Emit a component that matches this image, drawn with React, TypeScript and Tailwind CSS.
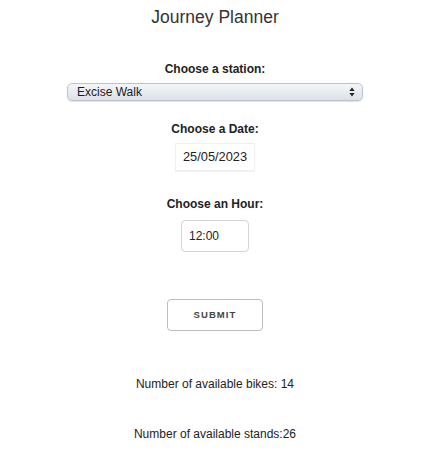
import * as React from 'react';

const JourneyPlanner: React.FC = () => {
  return (
    <div
      className="w-[430px] h-[476px] bg-white flex flex-col items-center text-[#333]"
      style={{ fontFamily: '"Liberation Sans", Arial, sans-serif' }}
    >
      <h1 className="mt-[7px] text-[17.5px] leading-[20px] font-normal text-[#333]">Journey Planner</h1>

      {/* Station */}
      <label className="mt-[35px] text-[12px] leading-[14px] font-bold text-[#222]">Choose a station:</label>
      <div className="mt-[7px] w-[296px] h-[18px] rounded-[5px] border border-[#bcc3cb] bg-gradient-to-b from-[#f3f6f9] to-[#dce2e8] shadow-[0_1px_1px_rgba(0,0,0,0.12)] flex items-center justify-between pl-[9px] pr-[7px]">
        <span className="text-[12px] leading-[14px] text-[#1a1a1a]">Excise Walk</span>
        <svg width="6" height="10" viewBox="0 0 6 10" className="text-[#222]">
          <path d="M3 0.5 L5.6 4 L0.4 4 Z" fill="currentColor" />
          <path d="M3 9.5 L5.6 6 L0.4 6 Z" fill="currentColor" />
        </svg>
      </div>

      {/* Date */}
      <label className="mt-[21px] text-[12px] leading-[14px] font-bold text-[#222]">Choose a Date:</label>
      <div className="mt-[7px] w-[80px] h-[28px] border border-[#f0f0f0] shadow-[0_1px_1px_rgba(0,0,0,0.05)] flex items-center justify-center">
        <span className="text-[12.8px] leading-[14px] text-[#222]">25/05/2023</span>
      </div>

      {/* Hour */}
      <label className="mt-[26px] text-[12px] leading-[14px] font-bold text-[#222]">Choose an Hour:</label>
      <div className="mt-[9px] w-[68px] h-[32px] border border-[#d4d4d4] rounded-[4px] flex items-center pl-[7px]">
        <span className="text-[12px] leading-[14px] text-[#222]">12:00</span>
      </div>

      {/* Submit */}
      <button className="mt-[47px] w-[96px] h-[32px] border border-[#bdbdbd] rounded-[4px] bg-white flex items-center justify-center">
        <span className="text-[9.5px] font-bold tracking-[1.1px] text-[#444]">SUBMIT</span>
      </button>

      <p className="mt-[46px] text-[12px] leading-[14px] text-[#222]">Number of available bikes: 14</p>
      <p className="mt-[36px] text-[12px] leading-[14px] text-[#222]">Number of available stands:26</p>
    </div>
  );
};

export default function App() {
  return <JourneyPlanner />;
}
